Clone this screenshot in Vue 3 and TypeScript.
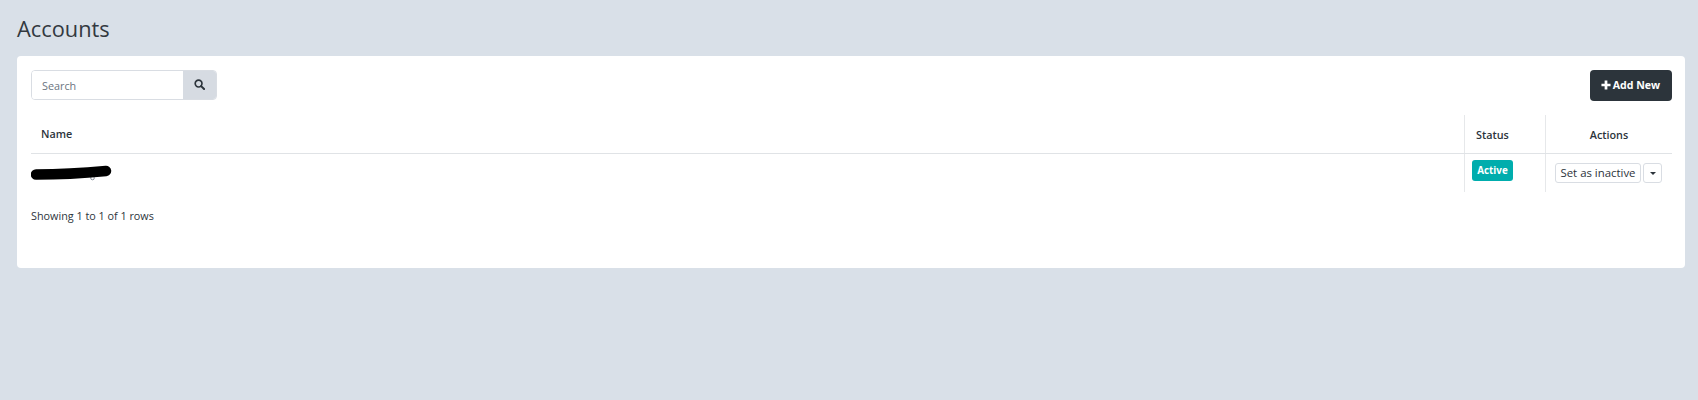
<script setup lang="ts">
interface Account {
  name: string
  status: string
}
const rows: Account[] = [{ name: 'Account', status: 'Active' }]
</script>

<template>
  <div class="page">
    <h1 class="title">Accounts</h1>
    <section class="card">
      <div class="toolbar">
        <div class="search">
          <input class="search-input" type="text" placeholder="Search" />
          <button class="search-btn" type="button" aria-label="Search">
            <svg width="11" height="11" viewBox="0 0 12 12" fill="none" stroke="#2c343b">
              <circle cx="5" cy="5" r="3.7" stroke-width="1.8" />
              <path d="M7.8 7.8 L11 11" stroke-width="2.200" stroke-linecap="round" />
            </svg>
          </button>
        </div>
        <button class="add-btn" type="button">
          <svg width="10" height="10" viewBox="0 0 11 11" fill="#fff">
            <path d="M4 0.5h3v3.5h3.5v3H7v3.500H4V7H0.500V4H4z" />
          </svg>
          <span>Add New</span>
        </button>
      </div>

      <div class="table">
        <div class="row head">
          <div class="cell name">Name</div>
          <div class="cell status">Status</div>
          <div class="cell actions center">Actions</div>
        </div>
        <div v-for="row in rows" :key="row.name" class="row body">
          <div class="cell name redacted">
            <svg class="scribble" width="84" height="20" viewBox="0 0 84 20" fill="none">
              <circle cx="61.500" cy="16" r="1.800" stroke="#6b7480" stroke-width="0.800" />
              <path d="M5 12.500 C26 12.500 54 11 75 9" stroke="#000" stroke-width="10.500" stroke-linecap="round" />
            </svg>
          </div>
          <div class="cell status"><span class="label">{{ row.status }}</span></div>
          <div class="cell actions">
            <div class="btn-group">
              <button class="small-btn" type="button">Set as inactive</button>
              <button class="small-btn caret-btn" type="button" aria-label="More"><i class="caret"></i></button>
            </div>
          </div>
        </div>
      </div>

      <p class="info">Showing 1 to 1 of 1 rows</p>
    </section>
  </div>
</template>

<style>
html,
body {
  margin: 0;
  background: #d9e0e8;
}
</style>

<style scoped>
.page {
  box-sizing: border-box;
  height: 400px;
  padding: 14px 13px 0 17px;
  background: #d9e0e8;
  font-family: "Open Sans", sans-serif;
  color: #2c343b;
}
.title {
  margin: 0 0 13px;
  font-size: 21.800px;
  line-height: 29px;
  font-weight: 400;
  color: #33393f;
}
.card {
  box-sizing: border-box;
  height: 212px;
  padding: 14px 13px 0 14px;
  background: #fff;
  border-radius: 4px;
}
.toolbar {
  display: flex;
  justify-content: space-between;
  align-items: flex-start;
  height: 45px;
}
.search {
  display: flex;
  width: 186px;
  height: 30px;
  box-sizing: border-box;
  border: 1px solid #d9dde3;
  border-radius: 4px;
  overflow: hidden;
}
.search-input {
  flex: 1;
  min-width: 0;
  box-sizing: border-box;
  padding: 0 10px;
  border: 0;
  outline: 0;
  font: 10.800px "Open Sans", sans-serif;
  color: #2c343b;
}
.search-input::placeholder {
  color: #6b7480;
  opacity: 1;
}
.search-btn {
  display: flex;
  align-items: center;
  justify-content: center;
  width: 33px;
  padding: 0 0 2px;
  border: 0;
  background: #d6dbe2;
}
.add-btn {
  display: flex;
  align-items: center;
  justify-content: center;
  gap: 2px;
  width: 82px;
  height: 31px;
  padding: 0 1px 1px 0;
  border: 0;
  border-radius: 4px;
  background: #2c343b;
  color: #fff;
  font: 700 10.600px "Open Sans", sans-serif;
}
.table {
  font-size: 10.800px;
}
.row {
  display: grid;
  grid-template-columns: 1fr 81px 127px;
}
.head {
  height: 38px;
  border-bottom: 1px solid #e0e3e6;
  font-weight: 600;
}
.head .cell {
  display: flex;
  align-items: center;
}
.head .name {
  padding-bottom: 2px;
}
.body {
  height: 38px;
}
.cell {
  box-sizing: border-box;
}
.name {
  padding-left: 10px;
}
.status {
  padding-left: 11px;
  border-left: 1px solid #e6e8ea;
}
.actions {
  border-left: 1px solid #e6e8ea;
}
.center {
  justify-content: center;
}
.redacted {
  position: relative;
}
.scribble {
  position: absolute;
  left: 0;
  top: 8px;
}
.body .status {
  padding-left: 7px;
  padding-top: 6px;
}
.label {
  display: inline-block;
  box-sizing: border-box;
  width: 41px;
  height: 21px;
  border-radius: 3px;
  background: #00adad;
  color: #fff;
  font-size: 9.800px;
  font-weight: 700;
  line-height: 22px;
  text-align: center;
}
.btn-group {
  display: flex;
  gap: 2px;
  padding: 9px 0 0 9px;
}
.small-btn {
  box-sizing: border-box;
  width: 86px;
  height: 20px;
  padding: 0;
  border: 1px solid #d9dde3;
  border-radius: 3px;
  background: #fff;
  color: #2c343b;
  font: 400 11.400px/18px "Open Sans", sans-serif;
}
.caret-btn {
  display: flex;
  align-items: center;
  justify-content: center;
  width: 19px;
}
.caret {
  width: 0;
  height: 0;
  border-left: 3px solid transparent;
  border-right: 3px solid transparent;
  border-top: 3px solid #2c343b;
}
.info {
  margin: 15px 0 0;
  font-size: 10.800px;
  line-height: 18px;
  color: #2c343b;
}
</style>
